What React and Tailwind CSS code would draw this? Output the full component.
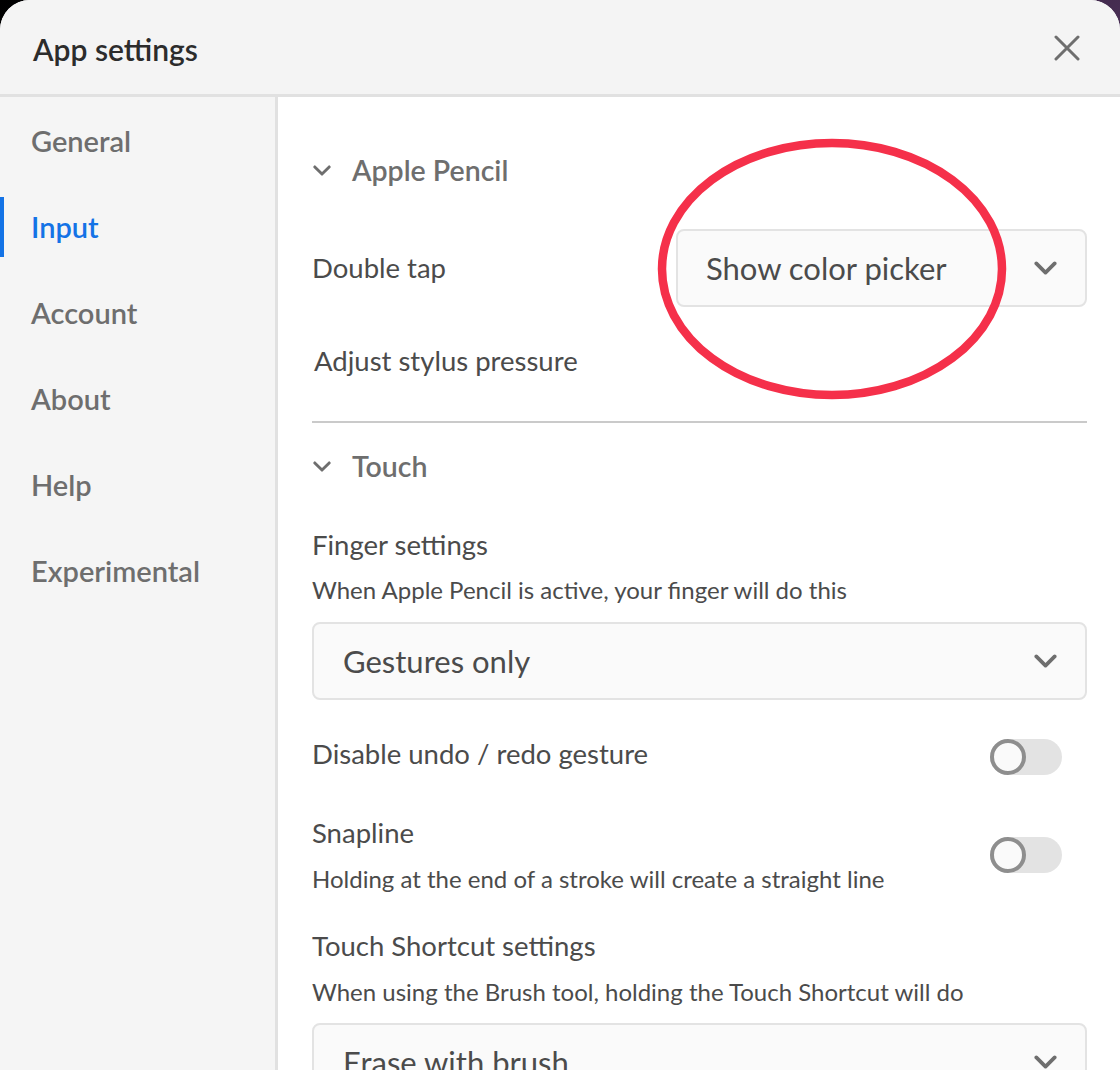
import React from "react";

const Chevron = ({ className = "" }) => (
  <svg viewBox="0 0 20 12" className={className} fill="none" stroke="currentColor" strokeWidth="3.2" strokeLinecap="round" strokeLinejoin="round">
    <path d="M2 2 L10 10 L18 2" />
  </svg>
);

const Dropdown = ({ label, className = "" }) => (
  <div className={"flex items-center justify-between h-[78px] bg-[#fafafa] border-2 border-[#e3e3e3] rounded-[8px] " + className}>
    <span className="text-[31px] text-[#4b4b4b] leading-none">{label}</span>
    <Chevron className="w-[23px] h-[14px] text-[#6e6e6e] mr-[28px]" />
  </div>
);

const Toggle = () => (
  <div className="relative w-[72px] h-[36px] rounded-full bg-[#e3e3e3] shrink-0 mr-[25px]">
    <div className="absolute left-0 top-0 w-[36px] h-[36px] rounded-full border-[4px] border-[#8e8e8e] bg-[#fafafa]" />
  </div>
);

const SectionHeader = ({ label, className = "" }) => (
  <div className={"flex items-center h-[54px] " + className}>
    <Chevron className="w-[18px] h-[11px] text-[#6e6e6e] ml-[1px]" />
    <span className="ml-[21px] text-[28.5px] font-semibold text-[#6e6e6e] leading-none">{label}</span>
  </div>
);

export default function App() {
  const nav = ["General", "Input", "Account", "About", "Help", "Experimental"];
  return (
    <div className="w-[1120px] h-[1070px] overflow-hidden bg-[linear-gradient(135deg,#000000_0%,#2a1a30_40%,#5b3b6b_60%,#4a1430_100%)]" style={{ fontFamily: "Lato, 'Noto Sans', sans-serif" }}>
      <div className="w-[1120px] h-[1110px] rounded-[30px] overflow-hidden bg-white flex flex-col">
        {/* Header */}
        <div className="h-[97px] shrink-0 bg-[#f4f4f4] border-b-[3px] border-[#e1e1e1] flex items-center justify-between pl-[33px] pr-[40px]">
          <span className="text-[30px] font-semibold text-[#2c2c2c] leading-none mt-[3px]">App settings</span>
          <svg viewBox="0 0 26 26" className="w-[26px] h-[26px] text-[#6e6e6e] mt-[2px]" fill="none" stroke="currentColor" strokeWidth="3" strokeLinecap="round">
            <path d="M2 2 L24 24 M24 2 L2 24" />
          </svg>
        </div>
        {/* Body */}
        <div className="flex flex-1">
          {/* Sidebar */}
          <div className="w-[278px] shrink-0 bg-[#f5f5f5] border-r-[3px] border-[#e1e1e1]">
            {nav.map((n) => (
              <div key={n} className="relative h-[86px] flex items-center pl-[31px]">
                {n === "Input" && <div className="absolute left-0 top-[14px] w-[4px] h-[60px] bg-[#1473e6]" />}
                <span className={"text-[29px] font-semibold leading-none " + (n === "Input" ? "text-[#1473e6]" : "text-[#6e6e6e]")}>{n}</span>
              </div>
            ))}
          </div>
          {/* Content */}
          <div className="flex-1 pl-[34px] pr-[33px] pt-[46px] flex flex-col">
            <SectionHeader label="Apple Pencil" />
            <div className="relative mt-[32px] flex items-center justify-between">
              <span className="text-[27.5px] text-[#4b4b4b] leading-none">Double tap</span>
              <Dropdown label="Show color picker" className="w-[411px] pl-[28px]" />
              <svg className="absolute left-[344px] top-[-91px] w-[352px] h-[262px] pointer-events-none" viewBox="0 0 352 262" fill="none">
                <ellipse cx="176" cy="131" rx="170" ry="126" stroke="#f5304a" strokeWidth="8.5" />
              </svg>
            </div>
            <div className="mt-[34px] h-[40px] flex items-center">
              <span className="text-[27.5px] text-[#4b4b4b] leading-none ml-[2px]">Adjust stylus pressure</span>
            </div>
            <div className="mt-[40px] h-[2px] bg-[#cacaca]" />
            <SectionHeader label="Touch" className="mt-[16px]" />
            <div className="mt-[34px] h-[36px] flex items-center">
              <span className="text-[27.5px] text-[#4b4b4b] leading-none">Finger settings</span>
            </div>
            <div className="mt-[12px] h-[30px] flex items-center">
              <span className="text-[24px] text-[#4b4b4b] leading-none">When Apple Pencil is active, your finger will do this</span>
            </div>
            <Dropdown label="Gestures only" className="mt-[17px] pl-[29px]" />
            <div className="mt-[39px] h-[36px] flex items-center justify-between">
              <span className="text-[27.5px] text-[#4b4b4b] leading-none mb-[7px]">Disable undo / redo gesture</span>
              <Toggle />
            </div>
            <div className="mt-[40px] flex items-center justify-between">
              <div className="flex flex-col">
                <div className="h-[36px] flex items-center">
                  <span className="text-[27.5px] text-[#4b4b4b] leading-none">Snapline</span>
                </div>
                <div className="mt-[13px] h-[30px] flex items-center">
                  <span className="text-[24px] text-[#4b4b4b] leading-none">Holding at the end of a stroke will create a straight line</span>
                </div>
              </div>
              <Toggle />
            </div>
            <div className="mt-[34px] h-[36px] flex items-center">
              <span className="text-[27.5px] text-[#4b4b4b] leading-none">Touch Shortcut settings</span>
            </div>
            <div className="mt-[13px] h-[30px] flex items-center">
              <span className="text-[24px] text-[#4b4b4b] leading-none">When using the Brush tool, holding the Touch Shortcut will do</span>
            </div>
            <Dropdown label="Erase with brush" className="mt-[16px] pl-[29px]" />
          </div>
        </div>
      </div>
    </div>
  );
}
